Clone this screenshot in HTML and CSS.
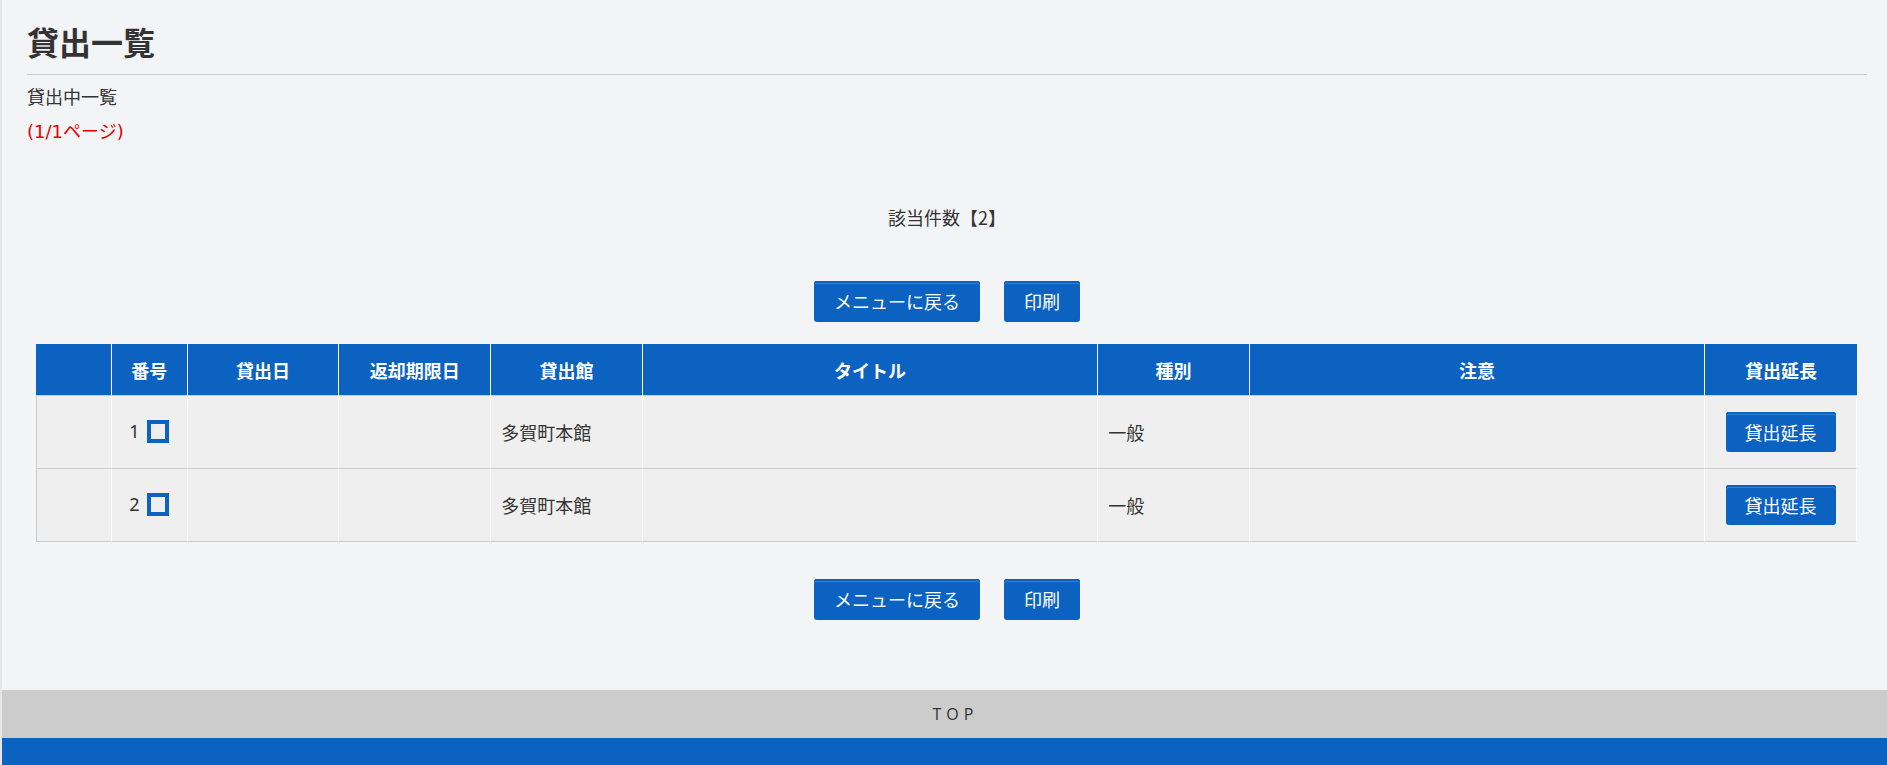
FILE: index.html
```html
<!DOCTYPE html>
<html lang="ja">
<head>
<meta charset="utf-8">
<title>貸出一覧</title>
<link rel="stylesheet" href="styles.css">
</head>
<body>
<div class="page">
  <main class="content">
    <h1 class="title">貸出一覧</h1>
    <p class="sub">貸出中一覧</p>
    <p class="pages">(1/1ページ)</p>
    <p class="count">該当件数【2】</p>
    <div class="actions">
      <button class="btn" type="button">メニューに戻る</button>
      <button class="btn" type="button">印刷</button>
    </div>
    <div class="table-wrap">
      <table class="list">
        <colgroup>
          <col class="c1"><col class="c1"><col class="c2"><col class="c2"><col class="c2"><col class="c6"><col class="c2"><col class="c6"><col class="c2">
        </colgroup>
        <thead>
          <tr class="head">
            <th></th><th>番号</th><th>貸出日</th><th>返却期限日</th><th>貸出館</th><th>タイトル</th><th>種別</th><th>注意</th><th>貸出延長</th>
          </tr>
        </thead>
        <tbody>
          <tr class="row">
            <td></td>
            <td class="num">1<span class="chk"></span></td>
            <td></td><td></td>
            <td>多賀町本館</td>
            <td></td>
            <td>一般</td>
            <td></td>
            <td class="ext"><button class="btn btn-sm" type="button">貸出延長</button></td>
          </tr>
          <tr class="row">
            <td></td>
            <td class="num">2<span class="chk"></span></td>
            <td></td><td></td>
            <td>多賀町本館</td>
            <td></td>
            <td>一般</td>
            <td></td>
            <td class="ext"><button class="btn btn-sm" type="button">貸出延長</button></td>
          </tr>
        </tbody>
      </table>
    </div>
    <div class="actions actions-bottom">
      <button class="btn" type="button">メニューに戻る</button>
      <button class="btn" type="button">印刷</button>
    </div>
  </main>
  <footer class="footer">
    <div class="top-bar">TOP</div>
    <div class="blue-bar"></div>
  </footer>
</div>
</body>
</html>
```

FILE: styles.css
```css
html, body {
  margin: 0;
  padding: 0;
}
body {
  background: #e6e6e6;
  font-family: "Noto Sans CJK JP", "Noto Sans", sans-serif;
  color: #333;
  font-size: 18px;
}
.page {
  margin-left: 2px;
  background: #f3f4f6;
  height: 765px;
  display: flex;
  flex-direction: column;
  overflow: hidden;
}
.content {
  padding: 0 20px 0 25px;
}
.title {
  margin: 0;
  padding-top: 19px;
  padding-bottom: 11px;
  font-size: 32px;
  line-height: 44px;
  font-weight: bold;
  border-bottom: 1px solid #cccccc;
}
.sub {
  margin: 3px 0 0;
  line-height: 36px;
}
.pages {
  margin: 0;
  line-height: 36px;
  color: #e60000;
  font-family: "DejaVu Sans", "Noto Sans CJK JP", sans-serif;
}
.count {
  margin: 49px 0 0;
  line-height: 36px;
  text-align: center;
}
.actions {
  margin-top: 46px;
  display: flex;
  justify-content: center;
  gap: 24px;
}
.actions-bottom {
  margin-top: 37px;
}
.btn {
  height: 41px;
  padding: 0 20px;
  border: none;
  border-radius: 3px;
  background: #0b62c1;
  color: #fff;
  font-family: "Noto Sans CJK JP", "Noto Sans", sans-serif;
  font-size: 18px;
  line-height: 41px;
  box-shadow: inset 0 2px 0 #0b62c1, inset 0 3px 0 #3a7ecb;
  cursor: pointer;
}
.btn-sm {
  height: 40px;
  line-height: 40px;
  padding: 0 19px;
}
.table-wrap {
  margin: 22px 10px 0 9px;
}
.list {
  width: 100%;
  table-layout: fixed;
  border-collapse: separate;
  border-spacing: 0;
}
.c1 { width: 4.1667%; }
.c2 { width: 8.3333%; }
.c6 { width: 25%; }
.head {
  height: 52px;
}
.head th {
  background: #0b62c1;
  color: #fff;
  font-weight: bold;
  font-size: 18px;
  padding: 0;
  border-right: 1px solid #fff;
  border-bottom: 1px solid #cccccc;
  text-align: center;
}
.head th:last-child {
  border-right: none;
}
.row {
  height: 73px;
}
.row td {
  background: #efefef;
  padding: 0 10px;
  border-right: 1px solid #fff;
  border-bottom: 1px solid #cccccc;
  vertical-align: middle;
}
.row td:first-child {
  border-left: 1px solid #cccccc;
}
.row td.num {
  text-align: center;
  padding: 0;
  font-family: "Noto Sans", "Noto Sans CJK JP", sans-serif;
}
.row td.ext {
  text-align: center;
  padding: 0;
}
.chk {
  display: inline-block;
  box-sizing: border-box;
  width: 22px;
  height: 23px;
  margin-left: 8px;
  border: 4px solid #0b62c1;
  vertical-align: middle;
  position: relative;
  top: -2px;
}
.footer {
  margin-top: 70px;
  flex: 1;
  display: flex;
  flex-direction: column;
}
.top-bar {
  height: 48px;
  line-height: 48px;
  background: #cccccc;
  text-align: center;
  font-size: 16px;
  letter-spacing: 5px;
  padding-left: 22px;
  color: #333;
  font-family: "Open Sans", "Noto Sans", sans-serif;
}
.blue-bar {
  flex: 1;
  background: #0b62c1;
}
```
